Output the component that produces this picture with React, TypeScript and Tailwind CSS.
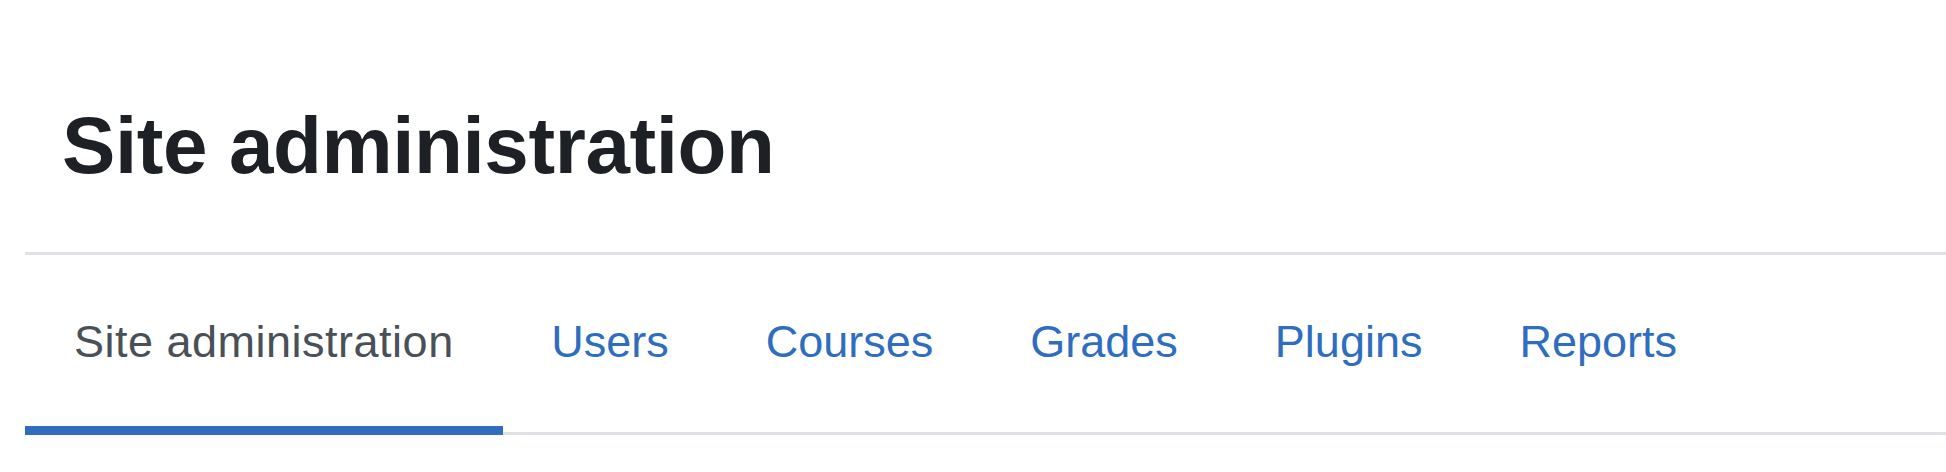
import React from 'react';

const tabs = [
  { label: 'Site administration', active: true },
  { label: 'Users', active: false },
  { label: 'Courses', active: false },
  { label: 'Grades', active: false },
  { label: 'Plugins', active: false },
  { label: 'Reports', active: false },
];

const App: React.FC = () => {
  return (
    <div className="w-full h-[472px] bg-white pl-[25px] overflow-hidden font-['Liberation_Sans',Arial,sans-serif]">
      {/* Page header */}
      <div className="pt-[106px] pb-[66px] pl-[37px] border-b-[3px] border-[#dee2e6]">
        <h1 className="text-[80px] leading-[80px] font-bold text-[#1d2125] tracking-[-0.4px]">
          Site administration
        </h1>
      </div>

      {/* Secondary navigation */}
      <nav className="flex border-b-[3px] border-[#dee2e6]">
        {tabs.map((tab) => (
          <a
            key={tab.label}
            href="#"
            className={
              tab.active
                ? 'h-[180px] -mb-[3px] pl-[49px] pr-[49px] pt-[64px] text-[45px] leading-[45px] tracking-[0.5px] whitespace-nowrap text-[#495057] border-b-[9px] border-[#2f6ebf]'
                : 'h-[180px] -mb-[3px] px-[48.5px] pt-[64px] text-[45px] leading-[45px] whitespace-nowrap text-[#2f6ebf] border-b-[9px] border-transparent'
            }
          >
            {tab.label}
          </a>
        ))}
      </nav>
    </div>
  );
};

export default App;
